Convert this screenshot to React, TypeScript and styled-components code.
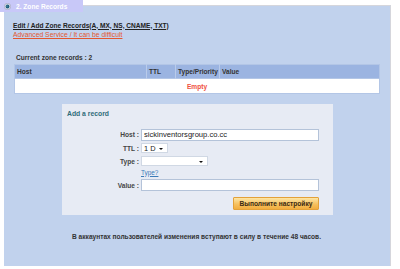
import React from "react";
import styled, { createGlobalStyle } from "styled-components";

const GlobalStyle = createGlobalStyle`
  html, body { margin: 0; padding: 0; background: #ffffff; }
  body { font-family: "Liberation Sans", Arial, sans-serif; }
  * { box-sizing: border-box; }
`;

const Frame = styled.div`
  position: relative;
  width: 400px;
  height: 269px;
  padding: 5px 9px 0 4px;
  overflow: hidden;
`;

const Tab = styled.div`
  position: absolute;
  left: 0;
  top: 0;
  width: 83px;
  height: 12px;
  background: #c8c8f8;
  display: flex;
  align-items: center;
  gap: 5px;
  padding-left: 4px;
  color: #ffffff;
  font-weight: bold;
  font-size: 6.6px;
  z-index: 2;
`;

const Panel = styled.div`
  width: 387px;
  height: 261px;
  background: #c1d2ed;
  border-top: 1px solid #d5d6dc;
  border-right: 1px solid #d5d6dc;
  padding: 14.5px 10px 0 9px;
  display: flex;
  flex-direction: column;
`;

const Heading = styled.div`
  font-size: 6.6px;
  line-height: 9px;
  font-weight: bold;
  color: #222;
  text-decoration: underline;
`;

const WarnLink = styled.a`
  font-size: 6.8px;
  line-height: 9px;
  color: #e4572e;
  text-decoration: underline;
  align-self: flex-start;
`;

const SectionLabel = styled.div`
  margin-top: 14px;
  margin-left: 3px;
  font-size: 6.6px;
  line-height: 9px;
  font-weight: bold;
  color: #333;
`;

const Table = styled.table`
  margin-top: 2.5px;
  margin-left: 1px;
  width: 366px;
  border-collapse: collapse;
  table-layout: fixed;
  font-size: 6.6px;
  font-weight: bold;
`;

const Th = styled.th<{ $w?: number }>`
  width: ${(p) => (p.$w ? `${p.$w}px` : "auto")};
  height: 14px;
  background: #9bb4e1;
  color: #333;
  text-align: left;
  padding: 0 0 0 2px;
  border-right: 1px solid #b9cbea;
  border-top: 1px solid #b3c6e6;
  &:last-child { border-right: 1px solid #b3c6e6; }
  &:first-child { border-left: 1px solid #b3c6e6; }
`;

const Td = styled.td`
  height: 15px;
  background: #ffffff;
  text-align: center;
  color: #f0503e;
  border: 1px solid #b3c6e6;
  padding: 0;
`;

const Box = styled.div`
  margin-top: 10px;
  margin-left: 49px;
  width: 271px;
  height: 111px;
  background: #e7ebf4;
  padding: 4.5px 14px 0 0;
  display: flex;
  flex-direction: column;
`;

const BoxTitle = styled.div`
  padding-left: 5px;
  font-size: 6.8px;
  line-height: 9px;
  font-weight: bold;
  color: #2f6b7a;
`;

const FieldRow = styled.div<{ $mt: number; $h: number }>`
  margin-top: ${(p) => p.$mt}px;
  height: ${(p) => p.$h}px;
  display: grid;
  grid-template-columns: 77px 1fr;
  column-gap: 2px;
  align-items: center;
`;

const Label = styled.label`
  text-align: right;
  white-space: nowrap;
  font-size: 6.6px;
  font-weight: bold;
  color: #454545;
`;

const TextInput = styled.input`
  width: 100%;
  height: 12px;
  margin: 0;
  padding: 0 2px;
  border: 1px solid #b4c3d9;
  background: #ffffff;
  font-family: "Liberation Sans", Arial, sans-serif;
  font-size: 7.6px;
  color: #222;
  outline: none;
`;

const Select = styled.div<{ $w: number }>`
  position: relative;
  width: ${(p) => p.$w}px;
  height: 10px;
  background: #ffffff;
  border: 1px solid #d0d8e4;
  padding-left: 2px;
  display: flex;
  align-items: center;
  font-size: 7.4px;
  color: #222;
  &::after {
    content: "";
    position: absolute;
    right: 4px;
    top: 3.5px;
    border-left: 2px solid transparent;
    border-right: 2px solid transparent;
    border-top: 2.5px solid #111;
  }
`;

const HelpLink = styled.a`
  font-size: 6.4px;
  color: #3b7bb8;
  text-decoration: underline;
  justify-self: start;
`;

const ButtonRow = styled.div`
  margin-top: 6px;
  display: flex;
  justify-content: flex-end;
`;

const Button = styled.button`
  width: 86px;
  height: 13px;
  margin: 0;
  padding: 0;
  border: 1px solid #e3a13a;
  border-radius: 1px;
  background: linear-gradient(#fde6a6, #f6c160 55%, #f2ad3e);
  font-family: "Liberation Sans", Arial, sans-serif;
  font-size: 6.6px;
  font-weight: bold;
  color: #3a2a12;
`;

const Note = styled.div`
  margin-top: 16.5px;
  text-align: center;
  font-size: 6.6px;
  line-height: 9px;
  font-weight: bold;
  color: #333;
`;

const TabIcon = () => (
  <svg width="7" height="7" viewBox="0 0 7 7">
    <circle cx="3.5" cy="3.5" r="3.2" fill="#dfe3ee" stroke="#9a9ab8" strokeWidth="0.6" />
    <circle cx="3.5" cy="3.5" r="1.9" fill="#1f5f7c" />
    <circle cx="3" cy="3" r="0.6" fill="#7fb8d0" />
  </svg>
);

export default function App() {
  return (
    <>
      <GlobalStyle />
      <Frame>
        <Tab>
          <TabIcon />
          <span>2. Zone Records</span>
        </Tab>
        <Panel>
          <Heading>Edit / Add Zone Records(A, MX, NS, CNAME, TXT)</Heading>
          <WarnLink href="#">Advanced Service / It can be difficult</WarnLink>
          <SectionLabel>Current zone records : 2</SectionLabel>
          <Table>
            <thead>
              <tr>
                <Th $w={132}>Host</Th>
                <Th $w={29}>TTL</Th>
                <Th $w={44}>Type/Priority</Th>
                <Th>Value</Th>
              </tr>
            </thead>
            <tbody>
              <tr>
                <Td colSpan={4}>Empty</Td>
              </tr>
            </tbody>
          </Table>
          <Box>
            <BoxTitle>Add a record</BoxTitle>
            <FieldRow $mt={11} $h={12}>
              <Label>Host :</Label>
              <TextInput readOnly value="sickinventorsgroup.co.cc" />
            </FieldRow>
            <FieldRow $mt={2.5} $h={10}>
              <Label>TTL :</Label>
              <Select $w={27}>1 D</Select>
            </FieldRow>
            <FieldRow $mt={3} $h={10}>
              <Label>Type :</Label>
              <Select $w={67}></Select>
            </FieldRow>
            <FieldRow $mt={1.5} $h={9}>
              <span />
              <HelpLink href="#">Type?</HelpLink>
            </FieldRow>
            <FieldRow $mt={2.5} $h={12}>
              <Label>Value :</Label>
              <TextInput readOnly value="" />
            </FieldRow>
            <ButtonRow>
              <Button>Выполните настройку</Button>
            </ButtonRow>
          </Box>
          <Note>В аккаунтах пользователей изменения вступают в силу в течение 48 часов.</Note>
        </Panel>
      </Frame>
    </>
  );
}
